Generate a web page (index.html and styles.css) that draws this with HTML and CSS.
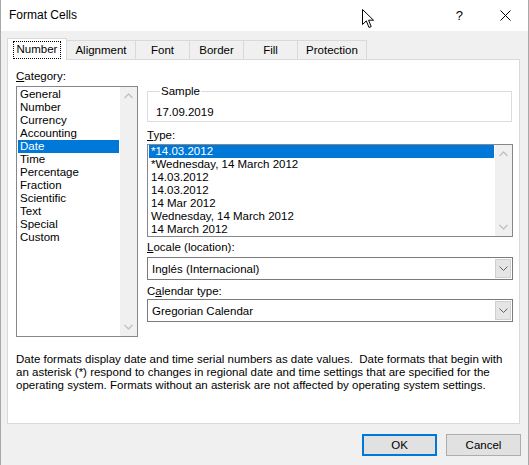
FILE: index.html
```html
<!DOCTYPE html>
<html lang="en">
<head>
    <meta charset="UTF-8">
    <title>Format Cells</title>
    <link rel="stylesheet" href="styles.css">
</head>
<body>

    <div class="window">
        <div class="titlebar">
            <span class="title">Format Cells</span>
            <span class="help">?</span>
            <svg class="close" width="11" height="11" viewBox="0 0 11 11">
                <path d="M0.5 0.5 L10.5 10.5 M10.5 0.5 L0.5 10.5" stroke="#000" stroke-width="1" fill="none"/>
            </svg>
        </div>

        <div class="body">
            <div class="tabs">
                <div class="tab active"><span class="focus">Number</span></div>
                <div class="tab wide">Alignment</div>
                <div class="tab">Font</div>
                <div class="tab">Border</div>
                <div class="tab">Fill</div>
                <div class="tab wide">Protection</div>
            </div>

            <div class="panel">
                <div class="columns">
                    <!-- Category list -->
                    <div class="col-left">
                        <div class="label"><u>C</u>ategory:</div>
                        <div class="listbox category">
                            <div class="items">
                                <div class="item">General</div>
                                <div class="item">Number</div>
                                <div class="item">Currency</div>
                                <div class="item">Accounting</div>
                                <div class="item selected">Date</div>
                                <div class="item">Time</div>
                                <div class="item">Percentage</div>
                                <div class="item">Fraction</div>
                                <div class="item">Scientific</div>
                                <div class="item">Text</div>
                                <div class="item">Special</div>
                                <div class="item">Custom</div>
                            </div>
                            <div class="scrollbar">
                                <svg width="9" height="6" viewBox="0 0 9 6"><path d="M0.5 5 L4.5 1 L8.5 5" stroke="#c2c2c2" stroke-width="1.4" fill="none"/></svg>
                                <svg width="9" height="6" viewBox="0 0 9 6"><path d="M0.5 1 L4.5 5 L8.5 1" stroke="#c2c2c2" stroke-width="1.4" fill="none"/></svg>
                            </div>
                        </div>
                    </div>

                    <!-- Date options -->
                    <div class="col-right">
                        <fieldset class="sample">
                            <legend>Sample</legend>
                            <div class="sample-value">17.09.2019</div>
                        </fieldset>

                        <div class="label type-label"><u>T</u>ype:</div>
                        <div class="listbox types">
                            <div class="items">
                                <div class="item selected">*14.03.2012</div>
                                <div class="item">*Wednesday, 14 March 2012</div>
                                <div class="item">14.03.2012</div>
                                <div class="item">14.03.2012</div>
                                <div class="item">14 Mar 2012</div>
                                <div class="item">Wednesday, 14 March 2012</div>
                                <div class="item">14 March 2012</div>
                            </div>
                            <div class="scrollbar">
                                <svg width="9" height="6" viewBox="0 0 9 6"><path d="M0.5 5 L4.5 1 L8.5 5" stroke="#c2c2c2" stroke-width="1.4" fill="none"/></svg>
                                <svg width="9" height="6" viewBox="0 0 9 6"><path d="M0.5 1 L4.5 5 L8.5 1" stroke="#c2c2c2" stroke-width="1.4" fill="none"/></svg>
                            </div>
                        </div>

                        <div class="label combo-label"><u>L</u>ocale (location):</div>
                        <div class="combo">
                            <span class="combo-text">Inglés (Internacional)</span>
                            <span class="combo-btn">
                                <svg width="9" height="5" viewBox="0 0 9 5"><path d="M0.5 0.5 L4.5 4.5 L8.5 0.5" stroke="#606060" stroke-width="1" fill="none"/></svg>
                            </span>
                        </div>

                        <div class="label combo-label calendar-label">C<u>a</u>lendar type:</div>
                        <div class="combo calendar">
                            <span class="combo-text">Gregorian Calendar</span>
                            <span class="combo-btn">
                                <svg width="9" height="5" viewBox="0 0 9 5"><path d="M0.5 0.5 L4.5 4.5 L8.5 0.5" stroke="#606060" stroke-width="1" fill="none"/></svg>
                            </span>
                        </div>
                    </div>
                </div>

                <p class="desc">Date formats display date and time serial numbers as date values.&nbsp; Date formats that begin with<br>an asterisk (*) respond to changes in regional date and time settings that are specified for the<br>operating system. Formats without an asterisk are not affected by operating system settings.</p>
            </div>

            <div class="buttons">
                <button class="btn default">OK</button>
                <button class="btn">Cancel</button>
            </div>
        </div>

        <!-- mouse pointer -->
        <svg class="cursor" width="13" height="20" viewBox="0 0 13 20">
            <polygon points="0.5,0.5 0.5,15.5 4.3,11.9 7,18.5 9.2,17.6 6.6,11.2 11.5,11.2" fill="#fff" stroke="#000" stroke-width="1"/>
        </svg>
    </div>

</body>
</html>
```

FILE: styles.css
```css
body {
    margin: 0;
    background-color: #f0f0f0;
    font-family: "Liberation Sans", Arial, sans-serif;
    font-size: 11.5px;
    color: #000;
}
.window {
    position: relative;
    width: 529px;
    height: 465px;
    box-sizing: border-box;
    border-left: 1px solid #a8a8a8;
    border-right: 1px solid #a8a8a8;
    background-color: #f0f0f0;
    overflow: hidden;
}
.titlebar {
    height: 31px;
    background-color: #fff;
    display: flex;
    align-items: center;
    padding-left: 8px;
}
.title {
    flex: 1;
    font-size: 12px;
    line-height: 15px;
}
.help {
    font-size: 13px;
    margin-right: 37px;
}
.close {
    margin-right: 17px;
}
.body {
    padding: 7px 7px 0 6px;
}
.tabs {
    display: flex;
    align-items: flex-end;
    height: 21px;
}
.tab {
    width: 54px;
    height: 19px;
    box-sizing: border-box;
    border: 1px solid #d9d9d9;
    border-bottom: none;
    border-left: none;
    display: flex;
    align-items: center;
    justify-content: center;
    line-height: 13px;
}
.tab.wide {
    width: 69px;
}
.tab.active {
    width: 60px;
    height: 22px;
    border-left: 1px solid #d9d9d9;
    background-color: #fff;
    margin-bottom: -1px;
    position: relative;
    z-index: 1;
}
.focus {
    border: 1px dotted #000;
    padding: 1px 3px 2px 3px;
}
.panel {
    height: 365px;
    box-sizing: border-box;
    border: 1px solid #d9d9d9;
    background-color: #fff;
    padding: 10px 0 0 8px;
    width: 513px;
}
.columns {
    display: flex;
    gap: 9px;
}
.label {
    line-height: 13px;
    height: 13px;
}
.listbox {
    display: flex;
    border: 1px solid #828790;
    box-sizing: border-box;
}
.listbox .items {
    flex: 1;
    padding: 0 1px;
}
.item {
    height: 13px;
    line-height: 13px;
    padding-left: 2px;
    white-space: nowrap;
}
.item.selected {
    background-color: #0078d7;
    color: #fff;
}
.scrollbar {
    width: 17px;
    background-color: #f0f0f0;
    display: flex;
    flex-direction: column;
    justify-content: space-between;
    align-items: center;
    padding: 6px 0;
}
.category {
    margin-top: 3px;
    width: 122px;
    height: 251px;
}
.category .items {
    padding-top: 1px;
}
.col-right {
    width: 366px;
}
.sample {
    margin: 15px 0 0 0;
    padding: 8px 0 2px 8px;
    border: 1px solid #dcdcdc;
    width: 365px;
    box-sizing: border-box;
}
.sample legend {
    padding: 0 1px;
    margin-left: 4px;
    line-height: 13px;
}
.sample-value {
    line-height: 13px;
}
.type-label {
    margin-top: 7px;
}
.types {
    margin-top: 2px;
    height: 93px;
}
.combo-label {
    margin-top: 4px;
}
.calendar-label {
    margin-top: 5px;
}
.combo {
    margin-top: 3px;
    height: 23px;
    border: 1px solid #7a7a7a;
    box-sizing: border-box;
    display: flex;
    align-items: center;
    padding: 1px;
}
.combo.calendar {
    margin-top: 1px;
}
.combo-text {
    flex: 1;
    padding-left: 3px;
}
.combo-btn {
    width: 16px;
    height: 19px;
    box-sizing: border-box;
    background-color: #e5e5e5;
    border: 1px solid #cfcfcf;
    display: flex;
    align-items: center;
    justify-content: center;
}
.desc {
    margin: 16px 0 0 0;
    line-height: 13px;
    white-space: nowrap;
}
.buttons {
    display: flex;
    justify-content: flex-end;
    gap: 9px;
    margin-top: 10px;
    margin-right: 0;
}
.btn {
    width: 75px;
    height: 22px;
    font-family: inherit;
    font-size: 11.5px;
    background-color: #e1e1e1;
    border: 1px solid #adadad;
    padding: 0;
    color: #000;
}
.btn.default {
    border: 2px solid #0078d7;
}
.cursor {
    position: absolute;
    left: 361px;
    top: 9px;
}
```
